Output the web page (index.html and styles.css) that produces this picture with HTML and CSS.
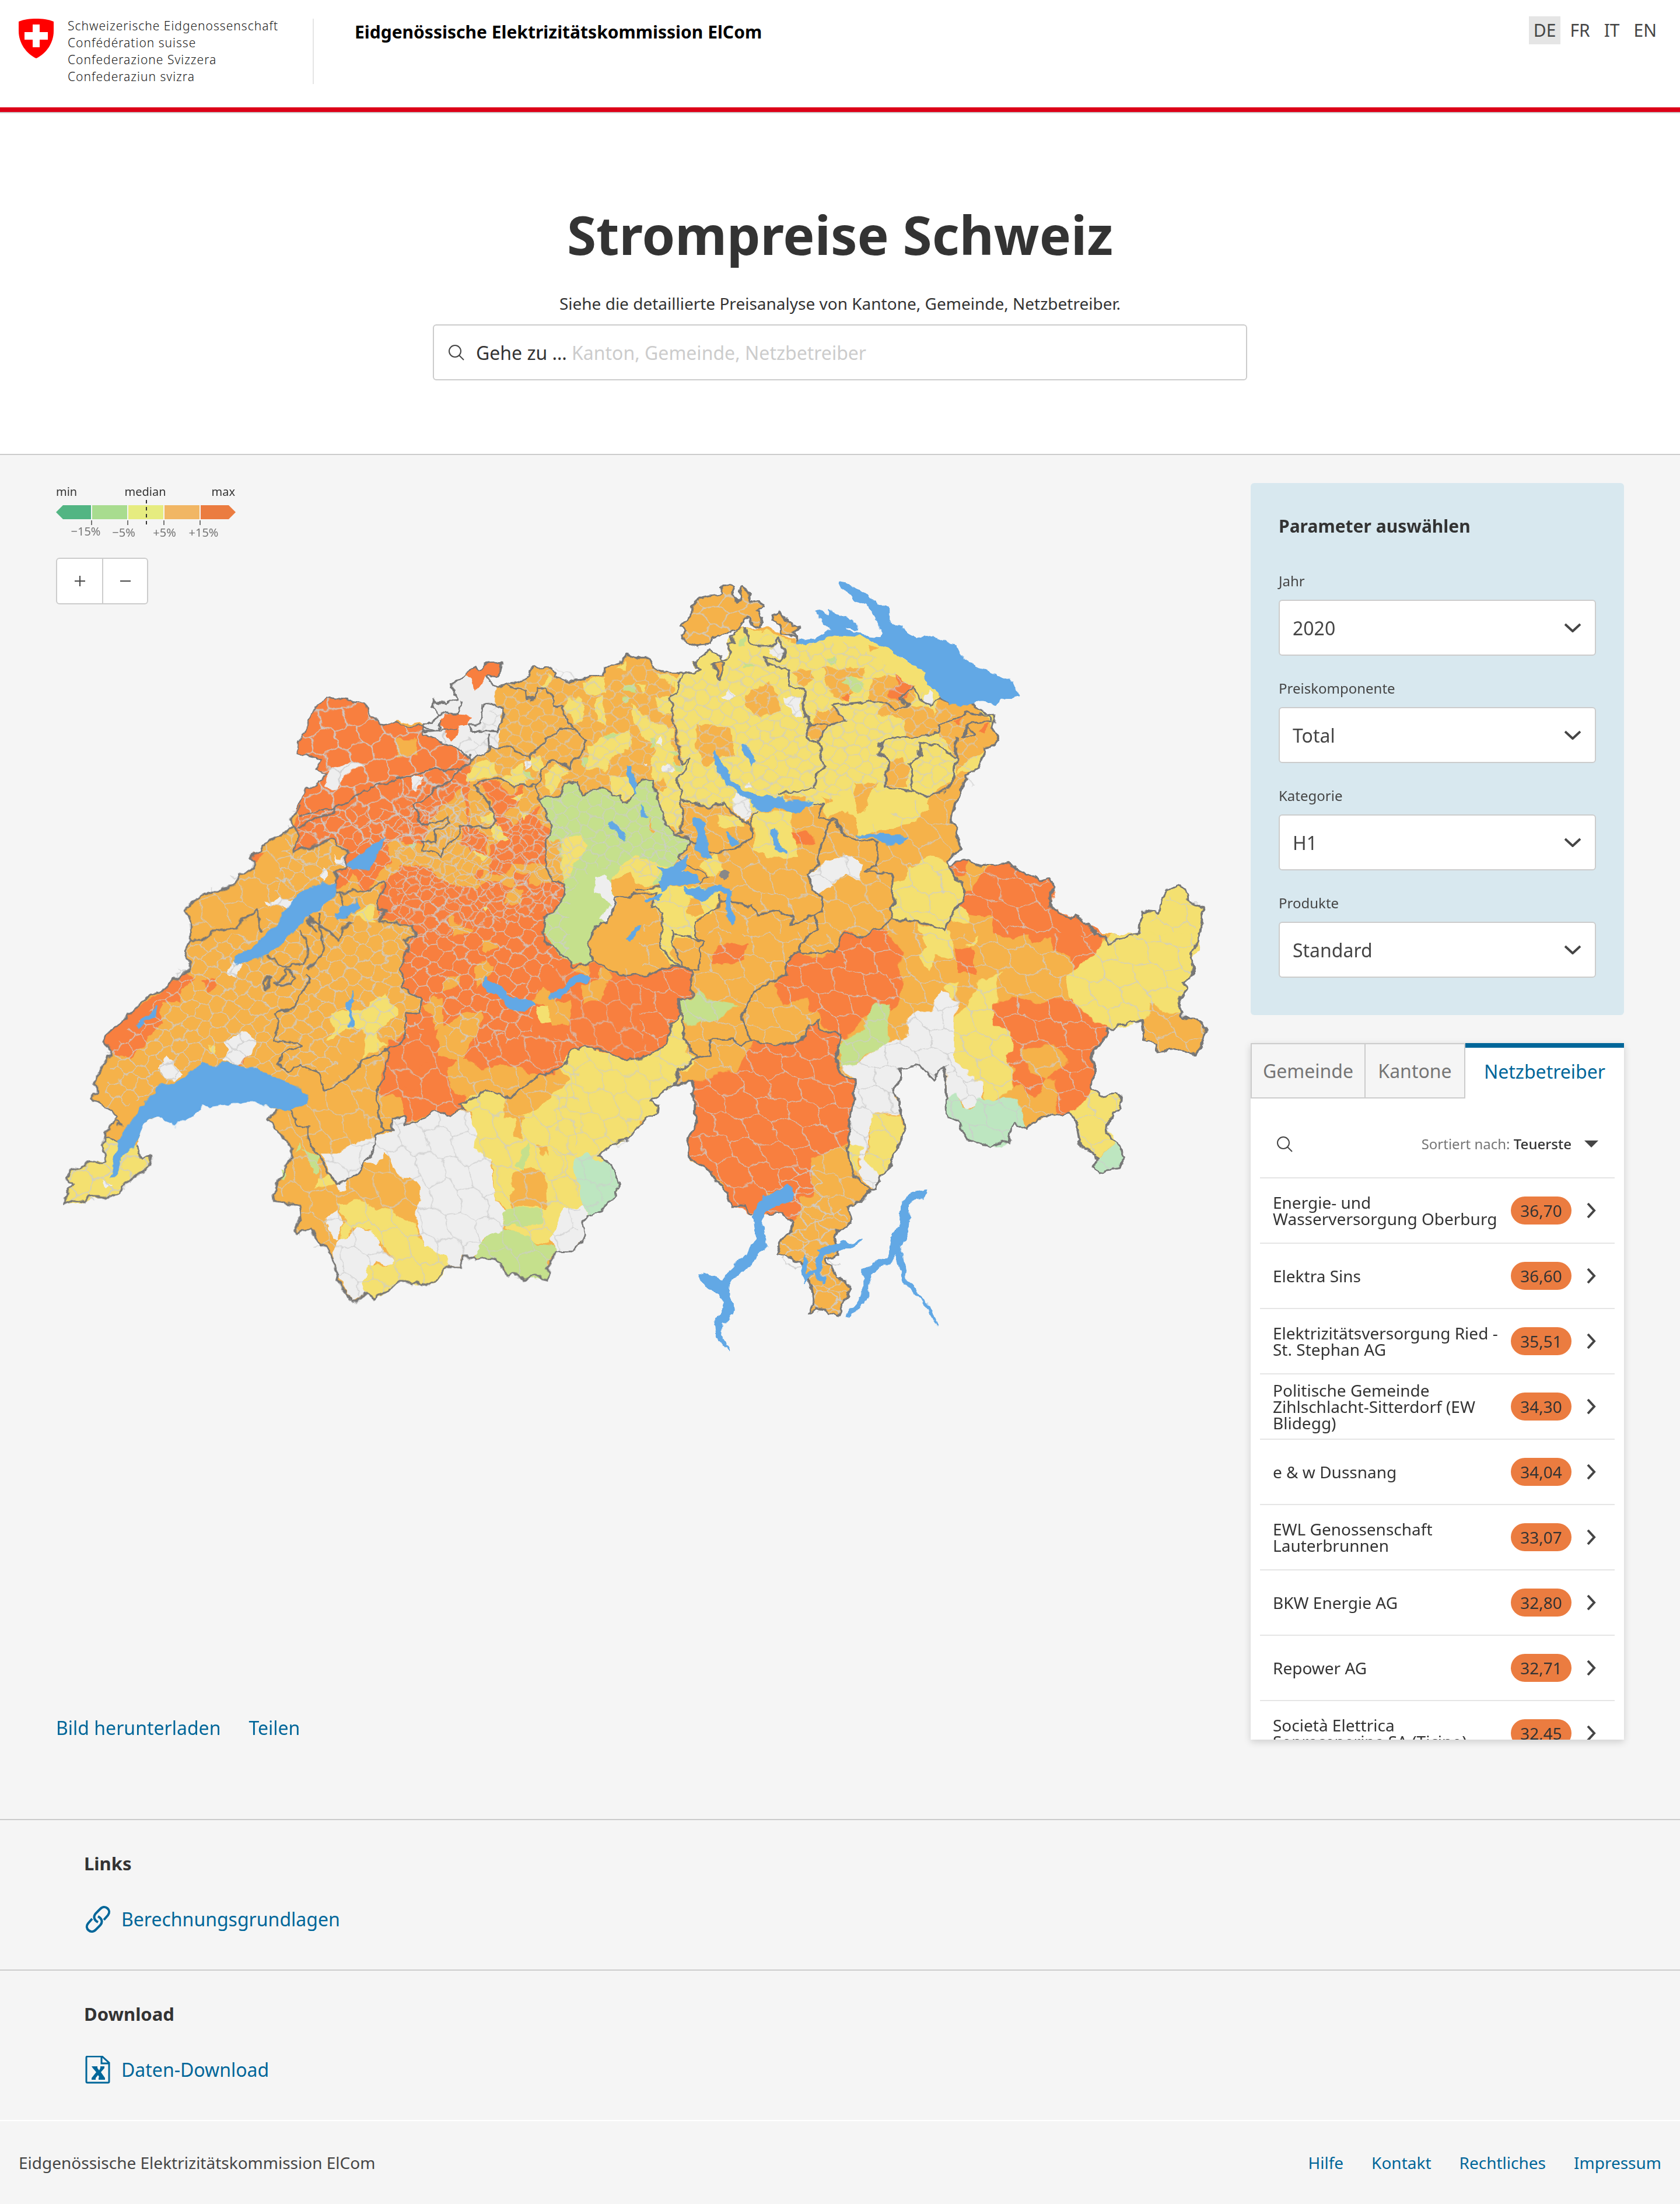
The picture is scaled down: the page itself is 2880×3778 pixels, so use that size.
FILE: index.html
```html
<!DOCTYPE html>
<html lang="de">
<head>
<meta charset="utf-8">
<meta name="viewport" content="width=device-width, initial-scale=1">
<title>Strompreise Schweiz</title>
<link rel="stylesheet" href="styles.css">
</head>
<body>
<header class="header">
  <a class="brand" href="#">
    <svg class="shield" viewBox="0 0 60 68" aria-hidden="true"><path fill="#f00" d="M0 5C9 1 20 0 30 0s21 1 30 5v16c0 21-13 39-30 47C13 60 0 42 0 21z"/><path fill="#fff" d="M24 10h12v13h14v13H36v13H24V36H10V23h14z"/></svg>
    <span class="brand-names"><span>Schweizerische Eidgenossenschaft</span><span>Confédération suisse</span><span>Confederazione Svizzera</span><span>Confederaziun svizra</span></span>
  </a>
  <p class="office">Eidgenössische Elektrizitätskommission ElCom</p>
  <nav class="langs" aria-label="Sprache"><a class="lang current" href="#de">DE</a><a class="lang" href="#fr">FR</a><a class="lang" href="#it">IT</a><a class="lang" href="#en">EN</a></nav>
</header>

<main>
<section class="hero">
  <h1>Strompreise Schweiz</h1>
  <p class="lead">Siehe die detaillierte Preisanalyse von Kantone, Gemeinde, Netzbetreiber.</p>
  <div class="search">
    <svg class="icon-search" viewBox="0 0 28 28" aria-hidden="true"><circle cx="12" cy="12" r="10"/><path d="M19 19l8 8"/></svg>
    <label for="goto">Gehe zu …</label>
    <input id="goto" type="text" placeholder="Kanton, Gemeinde, Netzbetreiber">
  </div>
</section>

<section class="explorer">
  <div class="map-column">
    <div class="map-stage">
      <svg class="map" viewBox="96 960 2000 1380" role="img" aria-label="Karte der Strompreise">
        <defs>
          <filter id="rough" filterUnits="userSpaceOnUse" x="60" y="950" width="2040" height="1400" color-interpolation-filters="sRGB">
            <feTurbulence type="fractalNoise" baseFrequency="0.045" numOctaves="3" seed="4"/>
            <feDisplacementMap in="SourceGraphic" scale="16" xChannelSelector="R" yChannelSelector="G"/>
          </filter>
          <path id="cells" d="M0 10 18 4 42 14 58 6 83 13 97 5 120 10M0 38 22 46 37 36 64 44 78 35 103 45 120 38M0 72 16 64 43 75 60 65 82 74 99 66 120 72M0 98 23 106 39 95 62 104 77 97 104 107 120 98M0 10V38M42 14 37 36M83 13 78 35M22 46 16 64M64 44 60 65M103 45 99 66M0 72V98M43 75 39 95M82 74 77 97M120 10V38M120 72V98M23 106 18 124M62 104 58 126M104 107 97 125M23-14 18 4M62-16 58 6M104-13 97 5"/>
          <pattern id="fine" width="120" height="120" patternUnits="userSpaceOnUse" patternTransform="rotate(24) scale(1.6 1.8)"><use href="#cells" class="mesh"/></pattern>
          <pattern id="medium" width="120" height="120" patternUnits="userSpaceOnUse" patternTransform="rotate(50) scale(.4 .5)"><use href="#cells" class="mesh"/></pattern>
          <pattern id="coarse" width="120" height="120" patternUnits="userSpaceOnUse" patternTransform="rotate(62) scale(2.6 2.2)"><use href="#cells" class="mesh"/></pattern>
          <path id="land-a" d="M745 0 735 15 705 48 720 60 712 70 690 88 660 103 640 115 625 122 625 138 600 150 590 168 605 185 590 200 565 212 552 240 540 250 515 254 480 268 440 275 425 290 392 325 405 345 414 365 412 412 402 425 397 455 408 478 405 500 385 520 358 535 340 555 300 575 270 600 235 635 205 665 150 718 182 760 165 775 150 800 135 830 122 845 130 870 115 897 140 915 165 930 192 952 180 975 165 990 160 1015 147 1045 158 1065 158 1085 140 1092 125 1088 100 1098 85 1108 55 1118 40 1140 60 1155 48 1180 33 1217 75 1203 95 1210 110 1195 145 1197 165 1205 205 1187 210 1162 240 1142 290 1110 298 1076 270 1085 252 1060 248 1030 262 990 290 955 330 955 360 980 430 940 450 912 540 908 610 908 670 925 648 960 665 985 690 1015 715 1045 715 1075 690 1115 672 1150 662 1185 665 1210 700 1218 740 1222 735 1250 738 1272 725 1295 728 1312 768 1290 785 1310 810 1345 830 1370 828 1392 845 1415 850 1450 870 1475 895 1515 910 1515 935 1495 963 1515 970 1495 1010 1480 1040 1450 1070 1462 1085 1458 1107 1473 1145 1445 1165 1430 1180 1408 1222 1408 1232 1378 1253 1377 1258 1390 1310 1385 1335 1400 1360 1443 1380 1428 1415 1450 1430 1440 1475 1450 1475 1415 1485 1400 1500 1363 1568 1362V0z"/>
          <path id="land-b" d="M0 578 40 570 85 585 115 568 140 545 120 520 125 495 170 508 200 490 183 440 230 415 235 390 262 375 275 388 310 365 355 357 345 405 300 415 330 445 370 440 440 412 457 377 520 377 535 400 530 415 570 432 600 418 660 415 690 410 700 385 750 368 780 335 800 345 850 345 865 380 895 398 965 400 1568 440V1568H0z"/>
          <path id="land-c" d="M1500 1568 1440 1568 1455 1500 1482 1465 1475 1395 1497 1345 1503 1270 1512 1230 1470 1205 1468 1180 1443 1148 1410 1170 1392 1215 1390 1248 1345 1240 1338 1320 1310 1330 1252 1355 1245 1332 1218 1330 1205 1290 1165 1262 1140 1260 1100 1230 1098 1180 1108 1160 1095 1118 1070 1130 1030 1100 965 1070 935 1080 910 1080 872 1065 832 1078 828 1060 855 1020 850 970 835 915 845 855 865 790 885 750 905 735 925 670 950 660 960 635 943 600 950 555 920 540 908 530 885 495 820 510 760 400 640 290 560 262 500 270 415 290 375 258 320 240 265 240 240 265 232 330 220 360 185 320 138 360 138 380 160 385 110 400 50 400 20 350 0 345V1568z"/>
          <path id="land-d" d="M90 552 135 543 142 575 145 610 143 712 122 755 132 820 185 862 200 905 215 925 232 945 243 990 275 992 300 1018 345 1018 378 1022 408 1052 400 1085 372 1125 362 1165 395 1172 430 1208 450 1265 460 1325 445 1375 465 1362 490 1368 500 1385 525 1390 540 1345 565 1285 520 1245 515 1210 495 1190 525 1160 512 1105 520 1080 555 1070 567 1030 557 995 588 975 612 935 632 927 640 880 672 845 678 790 697 750 707 715 705 685 693 665 695 620 690 595 673 570 690 545 695 495 750 482 782 532 800 490 818 483 815 510 820 655 850 690 875 750 935 773 968 755 988 767 998 690 1032 708 1068 675 1115 652 1132 665 1155 655 1172 690 1170 725 1180 775 1220 800 1225 825 1212 850 1230 865 1280 850 1300 812 1285 770 1258 740 1253 705 1268 650 1292 640 1295 603 1275 583 1238 592 1212 570 1215 435 1240 390 1250 345 1268 345 1310 322 1330 332 1345 312 1352 390 1380 400 1390 428 1430 420 1470 430 1488 448 1505 410 1513 340 1490 308 1455 305 1443 240 1462 210 1455 180 1480 150 1470 100 1497 70 1500 0 1245 0H0V400z"/>
          <path id="land-e" d="M900 1157 1000 1157 1072 1155 1090 1130 1108 1092 1100 1060 1108 1020 1160 1010 1178 975 1210 960 1208 940 1220 915 1200 850 1172 822 1150 805 1190 765 1215 752 1250 748 1275 708 1300 695 1305 670 1345 650 1348 622 1325 605 1350 592 1385 560 1405 550 1455 540 1470 552 1475 600 1473 715 1445 755 1458 800 1455 825 1500 848 1530 870 1568 935V0H800z"/>
          <path id="land-t" d="M325 520 308 519 292 516 270 514 255 499 232 496 229 501 222 508 212 528 211 536 229 540 226 548 232 551 218 563 210 576 240 600H334V525z"/>
          <path id="schaffhausen" d="M213 88 248 98 252 145 265 140 272 98 290 115 292 150 315 143 328 160 310 185 325 205 318 238 280 210 265 240 240 248 190 275 185 298 150 305 120 290 105 265 118 255 103 235 135 195 138 165 160 130 212 118zM418 290 400 265 375 258 370 228 350 215 352 195 372 180 385 212 420 230 405 255z"/>
        </defs>
        <g filter="url(#rough)">
          <g class="f-orange">
            <use href="#land-a" transform="translate(90 1380) scale(.574 .5612)"/>
            <use href="#land-b" transform="translate(680 960) scale(.5102 .4847)"/>
            <use href="#land-c" transform="translate(1100 960) scale(.6378 .4847)"/>
            <use href="#land-d" transform="translate(1100 1600) scale(.6378 .4719)"/>
            <use href="#land-e" transform="translate(440 1600) scale(.5102 .4719)"/>
            <use href="#schaffhausen" transform="translate(1100 960) scale(.6378 .4847)"/>
          </g>
          <!-- Jura -->
          <g transform="scale(2.41)">
            <use href="#land-t" class="f-red"/>
            <path class="f-orange" d="M284 523 298 525 298 540 284 538zM300 600 308 580 330 560 334 610z"/>
            <path class="f-empty" d="M233 548 250 541 260 544 245 552 240 562 232 560zM292 555 303 549 303 562 294 562z"/>
          </g>
          <!-- Western cantons -->
          <g transform="translate(90 1380) scale(.574 .5612)">
            <path class="f-red" d="M720 62 732 95 718 145 840 103 880 145 875 185 845 210 850 265 940 255 990 200 1050 120 1040 50 1080 20 1070 0 745 0zM975 345 980 250 1010 210 1080 180 1140 210 1180 240 1260 260 1300 230 1370 250 1420 240 1530 235 1530 300 1470 330 1470 420 1568 490 1568 740 1520 800 1450 830 1340 795 1225 800 1190 800 1195 850 1225 885 1230 925 1150 935 1050 975 1045 890 970 890 1005 715 1060 700 1060 635 1100 640 1100 590 1045 560 1040 500 1060 420 1085 400 1080 370zM150 718 235 635 340 555 395 512 422 535 415 550 385 570 380 600 330 610 325 665 290 710 235 775 182 755zM590 168 600 145 635 145 605 180zM440 540 490 530 490 555 470 575 455 550zM550 797 590 757 570 790zM1225 60 1250 60 1300 100 1290 150 1250 140zM1300 150 1340 110 1400 60 1470 90 1480 180 1380 175 1330 220z"/>
            <path class="f-orange" d="M1045 325 1080 300 1170 270 1180 300 1100 325zM1180 335 1210 360 1260 380 1240 400 1200 400zM1275 410 1310 415 1310 450 1280 440zM1340 300 1380 250 1410 255 1400 300zM850 265 880 235 900 210 920 260zM1000 120 1040 90 1060 130 1010 180z"/>
            <path class="f-yellow" d="M830 635 925 625 990 572 1032 635 965 700 975 725 1005 730 930 770 940 700 900 680 870 690 820 720 840 680zM895 335 960 300 960 355 930 350zM160 1015 147 1045 158 1065 158 1085 125 1088 100 1098 55 1118 40 1140 60 1155 33 1217 95 1210 145 1197 165 1205 205 1187 210 1162 290 1110 298 1076 270 1085 252 1060 248 1030 200 1030zM465 738 490 740 485 757zM1310 65 1350 80 1360 115 1310 95zM1245 132 1295 150 1285 168zM1280 320 1300 315 1295 335zM1045 62 1075 68 1060 88z"/>
            <path class="f-empty" d="M630 300 680 280 720 290 710 315 650 305zM525 510 545 475 565 495 545 530zM795 210 812 190 825 215 810 232zM838 155 860 165 880 150 875 185 850 175zM510 725 565 692 605 718 590 760 550 795 510 780 525 750zM318 805 345 765 392 820 365 845 335 830zM148 1145 180 1158 160 1172z"/>
          </g>
          <!-- Northern midland -->
          <g transform="translate(680 960) scale(.5102 .4847)">
            <path class="f-red" d="M270 785 340 780 380 830 430 800 420 850 360 900 380 940 455 880 475 870 470 920 510 950 510 975 500 1040 500 1070 380 1080 350 1120 305 1110 320 1010 370 980 330 930 320 860zM215 940 250 940 300 990 290 1030 255 1030 220 1010zM0 860 55 860 60 900 90 940 50 990 0 1000zM0 600 85 600 215 665 245 710 225 740 180 775 120 820 0 860zM5 1080 110 1090 110 1130 200 1150 260 1180 300 1180 290 1250 0 1250zM390 1100 450 1120 440 1150 395 1140zM260 1110 300 1090 280 1145zM435 1150 570 1145 555 1215 500 1255 490 1310 500 1355 570 1405 597 1438 560 1500 400 1500 380 1300z"/>
            <path class="f-orange" d="M0 632 70 632 70 690 0 690z"/>
            <path class="f-empty" d="M85 585 115 568 140 545 120 520 125 495 170 508 200 490 183 440 230 415 300 415 330 445 330 500 360 520 345 600 345 660 305 665 305 685 250 710 205 665 135 640 100 620zM50 760 95 765 90 800 60 820zM423 715 445 705 455 725 435 740z"/>
            <path class="f-red" d="M145 565 165 550 225 543 250 560 240 580 210 590 205 620 185 640 150 600zM235 390 262 375 275 388 310 365 355 357 345 405 300 412 290 430 268 465 262 435 235 410z"/>
            <path class="f-yellow" d="M570 490 620 490 630 560 600 580 570 530zM620 430 700 415 700 465 640 475zM670 490 690 480 705 540 700 590 670 570zM780 510 800 520 850 560 930 600 935 700 950 760 955 960 900 930 870 800 850 740 870 680 790 560zM640 660 720 610 780 600 785 660 730 700 700 740 640 740zM500 760 540 720 580 740 520 830 495 800zM715 760 780 770 800 820 770 855 745 830 720 820zM230 780 260 715 335 710 335 765zM335 770 410 760 440 800 385 800zM440 700 480 690 500 740 470 750zM385 740 420 720 440 790 400 770zM485 450 515 400 520 430 500 455zM740 385 770 355 770 390zM805 435 835 435 830 470zM870 490 920 480 925 540 890 545zM870 400 950 420 930 450 890 430zM385 845 430 820 415 855zM410 890 450 890 430 910zM280 905 330 890 325 930 290 925zM320 935 350 945 375 995 320 975z"/>
            <path class="f-orange" d="M900 550 930 550 925 580zM870 780 900 770 915 800 895 825 865 800zM920 630 940 630 940 655 920 650z"/>
            <path class="f-green" d="M475 845 500 838 555 838 570 790 605 785 620 830 680 805 745 830 760 858 782 852 795 825 820 775 860 785 880 860 900 920 930 968 975 985 990 998 945 1050 920 1100 880 1150 840 1150 790 1110 725 1130 720 1160 735 1200 705 1280 668 1290 648 1360 660 1420 597 1438 500 1355 490 1310 500 1255 555 1215 570 1145 550 1100 545 990 515 990 510 920zM760 440 800 435 805 470 770 470zM620 700 645 700 635 735 620 725zM700 615 745 608 730 630 710 635zM850 630 868 640 865 665 848 660zM930 720 985 720 975 740 935 750zM425 745 455 750 455 780 435 775zM755 490 780 490 770 510zM915 680 950 680 940 700zM40 1005 60 1000 55 1025z"/>
            <path class="f-yellow" d="M550 990 620 970 640 1010 600 1080 565 1135 550 1090zM725 1130 750 1080 800 1045 905 1080 890 1105 850 1150 800 1140 790 1110z"/>
            <path class="f-empty" d="M665 1115 700 1110 725 1150 725 1190 745 1200 705 1280 680 1265 720 1220 665 1170zM870 650 885 622 900 655zM895 725 915 720 930 745 900 750zM828 710 845 718 835 728z"/>
            <path class="f-orange" d="M845 905 870 965 855 960z"/>
          </g>
          <!-- Zürich and the east -->
          <g transform="translate(1100 960) scale(.6378 .4847)">
            <path class="f-yellow" d="M105 400 160 385 138 380 138 360 185 320 220 360 235 310 240 265 282 240 365 265 415 295 500 270 560 265 620 275 690 335 765 405 790 455 805 490 785 555 795 615 845 690 850 755 840 770 770 840 770 880 720 940 580 970 570 920 540 880 500 910 480 870 380 880 300 890 250 870 110 860 95 770 110 720 90 560 75 490z"/>
            <path class="f-yellow" d="M300 890 405 890 405 980 425 1055 340 1050 305 1020zM155 1080 205 1030 220 1100 180 1115zM0 1160 120 1150 215 1170 190 1255 145 1265 145 1340 90 1335 75 1395 110 1440 85 1435 50 1380 55 1250 25 1235 40 1190zM205 905 250 900 275 945 210 945zM675 1140 710 1130 715 1095 780 1045 825 1065 870 1180 830 1270 812 1310 770 1285 672 1268zM740 1285 835 1310 835 1410 790 1400 780 1450 740 1400 765 1370zM830 1270 850 1215 880 1225 875 1280 835 1285zM875 1365 908 1330 895 1365zM850 755 870 715 930 665 905 735 885 750zM905 530 950 555 943 600 930 565zM1252 1355 1310 1330 1338 1320 1345 1240 1390 1248 1392 1215 1410 1170 1443 1148 1468 1180 1470 1205 1512 1230 1503 1270 1497 1345 1475 1395 1482 1465 1455 1500 1440 1568 1155 1568 1140 1475 1200 1410 1245 1350z"/>
            <path class="f-orange" d="M125 1190 160 1190 160 1260 125 1250zM145 585 200 580 240 600 245 685 170 725 145 660zM275 475 345 435 370 500 375 530 310 555 280 510zM405 395 460 385 465 420 435 450zM480 385 515 380 605 380 590 420 545 420 575 470 540 500 515 480zM605 300 640 310 620 325zM470 530 520 530 540 565 490 600 475 645 450 615 460 580zM630 545 650 515 720 515 785 530 800 590 795 615 710 625 705 570zM620 420 660 410 740 450 720 520 670 520 610 490zM570 790 630 785 600 890 585 900 570 830zM520 930 555 880 580 920 580 970 550 975zM660 715 700 700 715 730 715 805 655 800zM850 630 940 600 960 635 930 670 870 715 850 700zM380 830 445 845 430 860 390 855zM800 520 850 520 885 495 905 535 860 560 800 580zM192 370 220 365 207 420zM480 840 510 850 490 870z"/>
            <path class="f-red" d="M680 405 735 450 705 490 670 490 670 455 685 445zM535 485 570 470 560 500zM905 595 930 575 925 605zM840 575 860 562 852 585zM832 1078 872 1065 870 1110 850 1115zM905 1120 940 1080 965 1070 1030 1100 1070 1130 1095 1118 1108 1160 1098 1230 1165 1262 1205 1290 1245 1332 1230 1390 1160 1450 1150 1395 1105 1370 1095 1335 1050 1360 1045 1325 1000 1340 940 1320 945 1260 880 1250 850 1215 870 1180 895 1165zM840 1380 885 1370 905 1465 850 1460zM205 1360 288 1360 275 1420 185 1430zM402 965 430 955 465 975 465 1005 415 1010z"/>
            <path class="f-green" d="M540 430 560 415 600 440 575 465zM497 355 520 335 520 360 505 375zM262 280 283 275 275 305 260 300zM275 360 305 380 270 380z"/>
            <path class="f-empty" d="M338 315 365 290 388 320 370 350 345 335zM215 480 235 460 253 480 235 500zM385 480 425 485 430 555 412 550 390 510zM250 830 265 820 295 870 290 920 275 930 250 880zM440 1110 545 1045 595 1075 580 1130 550 1110 475 1190 460 1160zM758 500 772 455 785 495 772 525zM282 800 292 782 298 800z"/>
            <path class="f-dark" d="M205 1120 222 1095 238 1115 220 1135z"/>
          </g>
          <!-- Berne highlands and Valais -->
          <g transform="translate(440 1600) scale(.5102 .4719)">
            <path class="f-red" d="M900 0 970 0 1000 80 1040 105 1140 110 1205 150 1320 150 1390 115 1460 130 1460 235 1420 240 1420 290 1390 330 1380 400 1310 450 1235 460 1100 408 1055 430 1055 470 1000 510 940 520 860 475 760 490 690 460 740 330 700 0zM540 490 620 440 680 465 650 490 650 560 700 600 705 640 650 660 605 645 500 690 490 560 560 570z"/>
            <path class="f-orange" d="M610 355 690 290 755 280 750 330 695 455 765 490 870 480 940 520 835 602 765 568 740 595 700 600 650 560 650 490 675 465 605 440zM555 260 600 225 625 240 630 340 600 360 580 300zM400 595 485 590 495 660 455 680 450 710 425 715zM1060 130 1110 110 1115 160zM1090 190 1140 165 1160 130 1185 130 1185 160 1155 240 1100 260zM735 130 760 90 800 120 780 160 735 200zM750 20 790 20 805 50 770 70zM620 210 640 170 685 155 670 190 630 215zM920 255 960 195 1000 240 1060 245 1050 330 1000 335 960 260z"/>
            <path class="f-yellow" d="M940 270 970 260 995 320 955 325zM685 620 765 568 835 602 830 668 870 670 900 655 945 640 1050 530 1025 495 1055 425 1100 408 1235 460 1310 450 1380 400 1395 330 1420 285 1435 295 1430 370 1445 425 1480 455 1450 495 1410 500 1405 550 1350 592 1325 605 1348 622 1345 650 1305 670 1250 748 1190 765 1150 805 1172 822 1200 850 1220 915 1208 960 1178 975 1160 1010 1108 1018 1035 1005 1000 1090 980 1125 940 1120 830 1070 835 1000 800 960 790 830 760 820 730 780 720 650z"/>
            <path class="f-orange" d="M868 670 900 660 890 745 865 740zM860 880 905 845 970 870 975 1003 910 990 858 990zM940 775 975 780 975 810z"/>
            <path class="f-green" d="M865 845 910 755 918 780 900 855zM835 1000 870 990 965 1005 960 1050 825 1062zM815 1072 910 1095 945 1128 1000 1135 1000 1157 975 1190 972 1255 910 1258 870 1232 845 1250 830 1215 795 1185 725 1180 755 1110zM150 785 210 810 205 880 185 880 180 830zM130 790 145 762 150 780zM80 850 97 880 90 895 75 890z"/>
            <path class="f-mint" d="M1063 820 1105 800 1150 830 1172 822 1200 850 1220 915 1208 960 1178 975 1160 1010 1108 1018 1085 960z"/>
            <path class="f-empty" d="M1030 1005 1095 985 1108 1020 1100 1060 1108 1092 1072 1155 1000 1157 1000 1135 985 1110zM400 740 455 715 455 680 495 665 500 695 540 685 605 645 650 660 710 645 735 700 730 780 785 825 800 960 835 1010 820 1080 755 1105 745 1150 725 1170 695 1172 690 1205 640 1205 625 1165 600 1165 560 1130 535 1060 545 920 515 880 490 890 450 830 430 800 400 835 365 825zM215 800 270 800 340 755 395 750 395 790 330 880 265 905 240 850zM262 910 300 890 305 925 275 935zM230 1040 275 1005 295 1060 270 1115 240 1080zM245 1190 270 1120 330 1075 395 1080 410 1130 460 1190 455 1205 400 1190 355 1265 365 1310 325 1337 290 1270 265 1240 265 1210z"/>
            <path class="f-yellow" d="M270 980 350 975 400 1000 430 990 530 1065 560 1130 625 1165 645 1205 630 1240 560 1287 485 1258 450 1297 400 1320 395 1337 365 1310 352 1265 375 1205 460 1200 440 1145 405 1120 390 1075 320 1075 280 1115 300 1050zM195 925 240 865 258 905z"/>
          </g>
          <!-- Ticino and Grisons -->
          <g transform="translate(1100 1600) scale(.6378 .4719)">
            <path class="f-red" d="M135 543 185 530 205 500 260 500 300 395 365 405 400 400 445 370 445 335 475 320 480 345 535 370 520 450 540 515 570 530 572 600 552 720 550 765 455 820 462 950 430 960 408 1050 378 1022 345 1018 300 1018 243 990 232 945 185 862 132 820 122 755 143 712 145 610zM425 72 455 95 515 75 545-20 585 20 650-20 690 50 708 80 685 110 703 170 695 230 665 285 640 255 600 310 545 385 530 370 485 330 475 285 445 280 440 235 375 260 355 180 390 150 390 100zM945 265 1000 230 1060 255 1130 235 1160 245 1250 325 1250 345 1240 390 1215 435 1212 570 1160 655 1132 665 1118 650 1060 600 1000 560 1000 490 978 475 980 435 998 430 985 360 945 335z"/>
            <path class="f-orange" d="M1020 420 1110 400 1150 470 1110 490 1090 530 1040 500zM965 595 1015 545 1060 600 1085 530 1110 530 1118 650 1035 700 1020 600zM330 940 365 940 350 955z"/>
            <path class="f-green" d="M545 385 600 350 615 280 635 252 660 260 665 360 660 400 600 450 575 478 535 485 525 410zM100 240 135 240 150 205 185 245 262 260 185 320 115 330z"/>
            <path class="f-empty" d="M540 485 580 475 660 395 715 375 712 320 745 285 785 280 800 205 850 245 845 290 840 460 865 495 915 545 918 610 875 640 850 580 820 600 818 483 782 532 750 482 695 495 690 545 673 570 695 620 693 665 625 645 610 740 600 820 635 850 640 880 632 927 612 925 580 870 595 820 555 765 552 720 572 600 570 530z"/>
            <path class="f-yellow" d="M620 645 693 670 707 715 678 790 672 845 645 875 600 825 615 740zM553 770 595 770 580 870 565 850zM845 305 870 265 915 170 970 142 950 185 960 245 945 270 945 335 990 360 1000 430 980 440 1000 520 995 570 960 590 925 615 915 545 865 495 840 460zM810 190 850 175 850 210 835 235 815 210zM1145 165 1245 30 1260 0 1500 0 1497 70 1470 100 1480 150 1455 180 1462 210 1443 240 1450 290 1405 290 1370 245 1365 290 1330 332 1268 345 1220 320 1160 245zM1155 655 1212 570 1238 592 1275 583 1295 603 1292 640 1268 650 1253 705 1275 755 1225 825 1220 800 1180 775 1170 725 1172 690z"/>
            <path class="f-mint" d="M820 600 850 575 865 630 885 640 910 605 960 598 1015 600 1032 708 998 690 988 767 935 773 875 750 850 690 820 655zM1275 755 1285 770 1300 812 1280 850 1230 865 1212 850 1230 820z"/>
          </g>
          <!-- Municipality boundaries -->
          <g>
            <path fill="url(#fine)" transform="translate(90 1380) scale(.43 .42)" d="M950 20 1900 0 2060 100 2060 600 1950 700 1900 950 1700 1000 1500 900 1420 950 1200 960 1080 1130 1050 1080 880 1150 550 1080 400 1180 180 1270 230 1100 220 1010 480 730 540 560 850 500z"/>
            <path fill="url(#fine)" transform="translate(90 1380) scale(.574 .5612)" d="M160 1015 147 1045 158 1085 55 1118 40 1140 60 1155 33 1217 165 1205 205 1187 290 1110 298 1076 252 1060 248 1030z"/>
            <path fill="url(#fine)" transform="translate(680 960) scale(.37 .35)" d="M530 590 640 550 750 520 950 610 1050 560 1150 490 1300 560 1500 560 1580 480 1700 370 2150 420 2700 850 2670 1100 2300 1120 1700 1240 1400 1250 1330 1560 900 1500 800 1640 720 1700 0 1900 0 1100 250 1050z"/>
            <use href="#schaffhausen" fill="url(#fine)" transform="translate(1100 960) scale(.6378 .4847)"/>
            <path fill="url(#fine)" transform="translate(1100 1600) scale(.6378 .4719)" d="M370 860 460 830 500 950 560 1030 510 1100 520 1160 560 1290 525 1390 450 1370 450 1265 362 1165 408 1052z"/>
            <path fill="url(#coarse)" transform="translate(90 1380) scale(.574 .5612)" d="M660 960 760 920 800 880 900 780 1000 700 1568 700V1362L1500 1363 1475 1450 1360 1443 1310 1385 1232 1378 1107 1473 1040 1450 963 1515 895 1515 828 1392 728 1312 740 1222 662 1185 715 1050zM625 125 392 325 414 400 700 290 840 103 720 62z"/>
            <use href="#land-d" fill="url(#coarse)" transform="translate(1100 1600) scale(.6378 .4719)"/>
            <path fill="url(#coarse)" transform="translate(1100 960) scale(.6378 .4847)" d="M110 860 480 870 580 970 840 770 850 970 830 1070 965 1070 1095 1118 1098 1230 1245 1332 1338 1320 1443 1148 1512 1230 1480 1320H0V1000z"/>
            <path fill="url(#coarse)" transform="translate(440 1600) scale(.5102 .4719)" d="M1085 960 1108 1018 1220 915 1150 805 1250 748 1345 650 1325 605 1405 550 1300 400V130H1000V960z"/>
            <use href="#land-t" fill="url(#medium)" transform="scale(2.41)"/>
          </g>
          <!-- Cantonal and national boundaries -->
          <g class="border" transform="translate(90 1380) scale(.574 .5612)">
            <path d="M745 0 735 15 705 48 720 60 712 70 690 88 660 103 640 115 625 122 625 138 600 150 590 168 605 185 590 200 565 212 552 240 540 250 515 254 480 268 440 275 425 290 392 325 405 345 414 365 412 412 402 425 397 455 408 478 405 500 385 520 358 535 340 555 300 575 270 600 235 635 205 665 150 718 182 760 165 775 150 800 135 830 122 845 130 870 115 897 140 915 165 930 192 952 180 975 165 990 160 1015 147 1045 158 1065 158 1085 140 1092 125 1088 100 1098 85 1108 55 1118 40 1140 60 1155 48 1180 33 1217 75 1203 95 1210 110 1195 145 1197 165 1205 205 1187 210 1162 240 1142 290 1110 298 1076 270 1085 252 1060 248 1030M670 925 648 960 665 985 690 1015 715 1045 715 1075 690 1115 672 1150 662 1185 665 1210 700 1218 740 1222 735 1250 738 1272 725 1295 728 1312 768 1290 785 1310 810 1345 830 1370 828 1392 845 1415 850 1450 870 1475 895 1515 910 1515 935 1495 963 1515 970 1495 1010 1480 1040 1450 1070 1462 1085 1458 1107 1473 1145 1445 1165 1430 1180 1408 1222 1408 1232 1378 1253 1377 1258 1390 1310 1385 1335 1400 1360 1443 1380 1428 1415 1450 1430 1440 1475 1450 1475 1415 1485 1400 1500 1363"/>
            <path d="M412 412 440 412 500 380 545 375 610 318 625 390M645 462 690 495 750 490 765 465 745 380M765 350 790 390 765 345 820 380 850 415 890 355M850 268 920 262 985 238 992 255 975 285 975 320 995 320 970 355 1080 370 1085 405 1050 410 1065 430 1040 500M720 60 732 95 718 145 840 103 850 125 880 145 875 185 842 210 850 265M730 70 780 45 840 20 848 0M860 270 868 310 885 345M790 330 810 430 790 470 765 500M630 545 655 525 640 560zM665 545 705 500 728 530 712 552zM160 1015 195 1030M190 965 215 975 195 980"/>
          </g>
          <g class="border border-jura" transform="scale(2.41)"><path d="M325 520 308 519 292 516 270 514 255 499 232 496 229 501 222 508 212 528 211 536 229 540 226 548 232 551 218 563 210 576M213 580 245 572 262 560 282 555"/></g>
          <g class="border" transform="translate(680 960) scale(.5102 .4847)">
            <path d="M85 585 115 568 140 545 120 520 125 495 170 508 200 490 183 440 230 415 235 390 262 375 275 388 310 365 355 357 345 405 300 415 330 445 370 440 440 412 457 377 520 377 535 400 530 415 570 432 600 418 660 415 690 410 700 385 750 368 780 335 800 345 850 345 865 380 895 398 965 400 1020 390 1000 378 1000 358 1050 320 1085 340 1090 360 1115 350 1120 300 1135 290 1125 265 1160 240"/>
            <path d="M570 1145 555 1215 500 1255 490 1310 500 1355 570 1405 597 1438 660 1420 648 1360 668 1290 705 1280 740 1200 800 1180 870 1180 855 1230 895 1245 885 1370 930 1420 960 1440M475 845 500 838 555 838 570 790 605 785 620 830 680 805 745 830 760 858 782 852 795 825 820 775 860 785 880 860 900 920 930 968 975 985 990 998 945 1050 1045 1120 1020 1150M475 845 510 920 515 970 500 1000 505 1090 525 1135 570 1145M465 800 490 740 535 710 580 730 620 690 635 640 595 600 565 545 565 515 530 510 500 455 470 450 470 490 432 495 430 465 370 440M595 600 545 600 480 650 440 700 380 665 310 660M320 500 290 510 285 580 245 580 250 605 335 608 360 560 360 520zM85 585 90 610 130 640 215 665 245 710 225 740 100 742 0 775M225 740 180 775 120 820 55 865 90 935 175 910 180 930 130 960 130 1000 80 990 90 1020 150 1050 160 1010 200 985 210 940 240 935 315 948 335 920 310 860 270 810 258 788 345 770 390 805 465 800 475 845M245 710 310 680 305 620M140 545 205 545 215 490M85 605 140 600 150 565M965 400 950 450 915 490 930 560 940 620 955 720 990 705 945 770 955 850 1050 870 1100 860 1135 890 1160 930 1195 937 1190 980 1145 1025 1085 1030 1050 1030M955 850 960 965 930 968M990 998 1030 1000M1195 937 1195 900 1215 885M800 1170 860 1155 885 1160M930 1310 925 1360 965 1440 1020 1445 1020 1380 1035 1345 925 1320M1035 1345 1005 1330 1000 1280 1080 1230 1085 1180M660 1420 700 1440 740 1465 850 1465 940 1430 985 1445"/>
          </g>
          <g class="border" transform="translate(1100 960) scale(.6378 .4847)">
            <use href="#schaffhausen"/>
            <path d="M1455 1500 1482 1465 1475 1395 1497 1345 1503 1270 1512 1230 1470 1205 1468 1180 1443 1148 1410 1170 1392 1215 1390 1248 1345 1240 1338 1320 1310 1330 1252 1355 1245 1332 1218 1330 1205 1290 1165 1262 1140 1260 1100 1230 1098 1180 1108 1160 1095 1118 1070 1130 1030 1100 965 1070 935 1080 910 1080 872 1065 832 1078 828 1060 855 1020 850 970 835 915 845 855 865 790 885 750 905 735 925 670 950 660 960 635 943 600 950 555 920 540 908 530 885 495M282 240 290 290 320 305 360 295 368 275 385 320 372 360 330 340 335 365 395 390 395 445 435 455 438 560 460 580 445 620 470 650 493 730 465 770 465 805 370 830M192 370 220 365 207 420zM445 580 500 580M470 650 495 590 545 565 510 520 560 508 620 495 680 525 720 510 690 480 735 455 745 490 775 520 805 490 830 515M650 640 690 625 795 615 800 580 860 560 870 540 930 550 940 572 890 575 865 600 860 625 895 610 870 590M850 630 845 690 840 770 820 810 770 840 735 820 655 800 660 715 640 680 650 640M735 820 718 720 750 690 745 650 790 660 845 690M465 865 485 870 480 910 510 920 555 975 635 1000 630 1080 600 1100 665 1105 675 1140 672 1260 640 1305 585 1340 545 1315 515 1390 425 1390M510 920 490 960 475 1080 440 1110 460 1160 485 1200 478 1245 405 1295 405 1260 370 1235 310 1255 295 1220 210 1210M465 1255 475 1305 425 1350 425 1390M672 1268 770 1285 812 1310 830 1270 870 1180 830 1080"/>
          </g>
          <g class="border" transform="translate(440 1600) scale(.5102 .4719)">
            <path d="M1000 1157 1072 1155 1090 1130 1108 1092 1100 1060 1108 1020 1160 1010 1178 975 1210 960 1208 940 1220 915 1200 850 1172 822 1150 805 1190 765 1215 752 1250 748 1275 708 1300 695 1305 670 1345 650 1348 622 1325 605 1350 592 1385 560 1405 550 1455 540"/>
            <path d="M265 905 330 880 395 790 400 740 425 715 455 715 455 680 495 665 500 695 540 685 605 645 650 660 700 640 685 620 735 600 765 568 835 602 945 520 1025 495 1055 450 1055 425 1100 408 1160 425 1235 460 1310 450 1380 400 1395 330 1420 290 1415 240 1460 235 1460 130 1390 110M265 905 210 810 175 750 175 705 140 700 120 640M420 715 410 640 400 575 430 520 440 420 410 440 360 455 320 510 225 570 210 515 150 475 110 500 75 470 80 440 150 405 130 390 65 390 65 295 120 270 180 170 165 150M440 420 500 375 510 290 545 295 550 235 490 200 485 130"/>
          </g>
          <g class="border" transform="translate(1100 1600) scale(.6378 .4719)">
            <path d="M135 543 142 575 145 610 143 712 122 755 132 820 185 862 200 905 215 925 232 945 243 990 275 992 300 1018M345 1018 378 1022 408 1052 400 1085 372 1125 362 1165 395 1172 430 1208 450 1265 460 1325 445 1375 465 1362 490 1368 500 1385 525 1390 540 1345 565 1285 520 1245 515 1210 495 1190 525 1160 512 1105 520 1080 555 1070 567 1030 557 995 588 975 612 935 632 927 640 880 672 845 678 790 697 750 707 715 705 685 693 665 695 620 690 595 673 570 690 545 695 495 750 482 782 532 800 490 818 483 815 510 820 655 850 690 875 750 935 773 968 755 988 767 998 690 1032 708 1068 675 1115 652 1132 665 1155 655 1172 690 1170 725 1180 775 1220 800 1225 825 1212 850 1230 865 1280 850 1300 812 1285 770 1258 740 1253 705 1268 650 1292 640 1295 603 1275 583 1238 592 1212 570 1215 435 1240 390 1250 345 1268 345 1310 322 1330 332 1345 312 1352 390 1380 400 1390 428 1430 420 1470 430 1488 448 1505 410 1513 340 1490 308 1455 305 1443 240 1462 210 1455 180"/>
            <path d="M100 240 115 400 155 450 180 440 180 385 245 385 262 405 290 390 365 405 400 400 445 370 445 335 475 320 480 345 535 370 520 450 540 515 570 530 572 600 552 720 550 770 570 880 612 935M290 390 270 290 290 235 345 175 390 150 390 100 425 72M155 450 95 500 90 552 135 543"/>
          </g>
          <!-- Lakes -->
          <g class="lake" transform="translate(1100 960) scale(.6378 .4847)"><path d="M530 75 550 80 605 125 660 175 660 210 740 280 780 270 840 295 860 350 940 400 995 430 1013 480 970 490 945 505 915 500 860 515 830 515 765 430 762 400 700 340 630 290 590 270 520 265 440 300 415 290 470 275 510 245 465 185 485 180 510 195 500 175 575 225 580 245 540 225 545 240 610 272 645 275 650 255 630 215 625 180 600 155 555 125 530 90zM195 670 210 700 240 785 310 840 380 840 380 855 465 855 460 868 405 892 375 880 320 885 270 830 235 800 210 750 195 700zM270 660 285 665 305 715 295 725 275 685zM575 968 610 968 660 982 708 980 705 998 660 1000zM140 912 175 925 170 990 185 1060 165 1050 145 1020 150 970 138 940zM230 970 250 980 262 1005 250 1012zM345 955 360 948 370 1010 382 1030 368 1030 355 1000zM40 1080 60 1090 85 1085 122 1045 120 1075 105 1110 140 1110 157 1140 100 1145 75 1150 50 1172 42 1140 58 1130 60 1110zM115 1155 175 1165 220 1150 240 1170 240 1240 250 1260 240 1288 228 1250 230 1180 215 1165 165 1197 120 1180zM15 1208 55 1180 45 1200 20 1212z"/></g>
          <g class="lake" transform="translate(680 960) scale(.5102 .4847)"><path d="M712 925 770 970 765 990 715 945zM778 735 790 735 805 800 800 825 785 790zM818 865 830 870 843 910 830 905zM770 1330 812 1295 812 1312 780 1345z"/></g>
          <g class="lake" transform="translate(440 1600) scale(.5102 .4719)"><path d="M765 165 800 185 860 235 920 245 935 265 885 283 850 270 830 240 770 200zM1070 155 1120 155 1110 175 1070 185 1000 240 985 235zM325 205 318 235 330 245 315 270 325 340 313 335 312 280 300 265 318 240z"/></g>
          <g class="lake" transform="translate(90 1380) scale(.574 .5612)"><path d="M805 235 845 240 852 262 830 285 760 345 640 460 555 485 545 470 635 400 700 320 730 275 790 245zM845 330 908 292 915 308 880 345 850 348zM995 95 985 125 940 190 905 200 878 180 925 150zM250 670 310 620 310 635 255 678zM175 1132 195 1030 262 925 325 850 375 850 450 790 480 798 510 787 590 805 710 850 760 885 762 915 712 930 610 908 540 908 475 918 450 912 430 940 360 980 330 955 290 952 262 990 210 1080 190 1130z"/></g>
          <g class="lake" transform="translate(1100 1600) scale(.6378 .4719)"><path d="M372 930 395 918 412 950 370 985 330 1015 320 1050 335 1110 330 1150 270 1230 240 1270 235 1320 250 1360 230 1410 210 1420 212 1450 235 1512 220 1490 200 1450 195 1410 220 1380 210 1310 180 1290 157 1240 175 1233 210 1260 255 1200 310 1110 300 1030 325 960zM590 1108 575 1140 520 1145 485 1175 482 1230 492 1270 465 1235 440 1275 430 1210 440 1165 442 1245 470 1220 474 1150 540 1120 570 1125zM770 928 755 965 720 985 715 1080 695 1140 715 1265 770 1350 795 1425 778 1390 760 1340 705 1270 685 1165 650 1210 610 1240 610 1325 560 1395 552 1385 595 1320 595 1225 665 1170 670 1100 695 1060 697 980 740 935z"/></g>
        </g>
      </svg>
      <div class="map-tools">
        <svg class="legend" viewBox="0 0 320 112" role="img" aria-label="Legende">
          <g class="legend-name"><text x="0" y="22">min</text><text x="153" y="22" text-anchor="middle">median</text><text x="307" y="22" text-anchor="end">max</text></g>
          <path fill="#52b583" d="M0 50 12 38h48v24H12z"/><path fill="#a8dc8f" d="M62 38h60v24H62z"/><path fill="#e6ec80" d="M124 38h60v24h-60z"/><path fill="#f1b664" d="M186 38h60v24h-60z"/><path fill="#eb7c40" d="M248 38h48l12 12-12 12h-48z"/>
          <path d="M155 29v44" stroke="#333" stroke-width="2" stroke-dasharray="6 6"/>
          <path d="M61 64v8M123 64v8M185 64v8M247 64v8" stroke="#757575" stroke-width="2"/>
          <g class="legend-value" text-anchor="middle"><text x="51" y="90">−15%</text><text x="116" y="92">−5%</text><text x="186" y="92">+5%</text><text x="253" y="92">+15%</text></g>
        </svg>
        <div class="zoom">
          <button type="button" aria-label="Vergrössern"><svg viewBox="0 0 20 20"><path d="M10 1v18M1 10h18"/></svg></button>
          <button type="button" aria-label="Verkleinern"><svg viewBox="0 0 20 20"><path d="M1 10h18"/></svg></button>
        </div>
      </div>
    </div>
    <div class="map-links"><a href="#bild">Bild herunterladen</a><a href="#teilen">Teilen</a></div>
  </div>

  <aside class="side">
    <form class="params">
      <h2>Parameter auswählen</h2>
      <div class="field"><label for="jahr">Jahr</label><div class="select"><select id="jahr"><option>2020</option></select><svg viewBox="0 0 28 16" aria-hidden="true"><path d="M1 2l13 12L27 2"/></svg></div></div>
      <div class="field"><label for="preis">Preiskomponente</label><div class="select"><select id="preis"><option>Total</option></select><svg viewBox="0 0 28 16" aria-hidden="true"><path d="M1 2l13 12L27 2"/></svg></div></div>
      <div class="field"><label for="kategorie">Kategorie</label><div class="select"><select id="kategorie"><option>H1</option></select><svg viewBox="0 0 28 16" aria-hidden="true"><path d="M1 2l13 12L27 2"/></svg></div></div>
      <div class="field"><label for="produkte">Produkte</label><div class="select"><select id="produkte"><option>Standard</option></select><svg viewBox="0 0 28 16" aria-hidden="true"><path d="M1 2l13 12L27 2"/></svg></div></div>
    </form>
    <div class="ranking">
      <div class="tabs" role="tablist"><button type="button" role="tab" class="tab">Gemeinde</button><button type="button" role="tab" class="tab">Kantone</button><button type="button" role="tab" class="tab active" aria-selected="true">Netzbetreiber</button></div>
      <div class="sortbar">
        <button type="button" class="plain" aria-label="Suchen"><svg class="icon-search" viewBox="0 0 28 28"><circle cx="12" cy="12" r="10"/><path d="M19 19l8 8"/></svg></button>
        <button type="button" class="plain sort"><span>Sortiert nach: <b>Teuerste</b></span><svg viewBox="0 0 24 12"><path d="M0 0h24L12 12z"/></svg></button>
      </div>
      <ul class="rows">
        <li><a href="#1"><span class="name">Energie- und Wasserversorgung Oberburg</span><span class="pill">36,70</span><svg viewBox="0 0 16 28"><path d="M2 2l11 12L2 26"/></svg></a></li>
        <li><a href="#2"><span class="name">Elektra Sins</span><span class="pill">36,60</span><svg viewBox="0 0 16 28"><path d="M2 2l11 12L2 26"/></svg></a></li>
        <li><a href="#3"><span class="name">Elektrizitätsversorgung Ried - St. Stephan AG</span><span class="pill">35,51</span><svg viewBox="0 0 16 28"><path d="M2 2l11 12L2 26"/></svg></a></li>
        <li><a href="#4"><span class="name">Politische Gemeinde Zihlschlacht-Sitterdorf (EW Blidegg)</span><span class="pill">34,30</span><svg viewBox="0 0 16 28"><path d="M2 2l11 12L2 26"/></svg></a></li>
        <li><a href="#5"><span class="name">e &amp; w Dussnang</span><span class="pill">34,04</span><svg viewBox="0 0 16 28"><path d="M2 2l11 12L2 26"/></svg></a></li>
        <li><a href="#6"><span class="name">EWL Genossenschaft Lauterbrunnen</span><span class="pill">33,07</span><svg viewBox="0 0 16 28"><path d="M2 2l11 12L2 26"/></svg></a></li>
        <li><a href="#7"><span class="name">BKW Energie AG</span><span class="pill">32,80</span><svg viewBox="0 0 16 28"><path d="M2 2l11 12L2 26"/></svg></a></li>
        <li><a href="#8"><span class="name">Repower AG</span><span class="pill">32,71</span><svg viewBox="0 0 16 28"><path d="M2 2l11 12L2 26"/></svg></a></li>
        <li><a href="#9"><span class="name">Società Elettrica Sopracenerina SA (Ticino)</span><span class="pill">32,45</span><svg viewBox="0 0 16 28"><path d="M2 2l11 12L2 26"/></svg></a></li>
      </ul>
    </div>
  </aside>
</section>

<section class="resource">
  <h2>Links</h2>
  <a href="#grundlagen"><svg viewBox="0 0 48 48" aria-hidden="true"><g fill="none" stroke="currentColor" stroke-width="4"><path d="M34 25l7-8c7-9-5-19-13-11l-8 8c-5 6-2 12 4 15"/><path d="M14 23l-7 8c-7 9 5 19 13 11l8-8c5-6 2-12-4-15"/></g></svg>Berechnungsgrundlagen</a>
</section>
<section class="resource">
  <h2>Download</h2>
  <a href="#daten"><svg viewBox="0 0 48 48" aria-hidden="true"><path fill="none" stroke="currentColor" stroke-width="3" d="M6 1h25l12 11v32q0 2-2 2H6q-2 0-2-2V3q0-2 2-2zM30 2v11h12"/><path fill="currentColor" d="M13 18h10v3l3 4 2-4v-3h7v3l-6 7 7 10v3H25v-3l1-2-2-3-4 5v3h-7v-3l8-10-6-7z"/></svg>Daten-Download</a>
</section>
</main>

<footer class="footer">
  <p>Eidgenössische Elektrizitätskommission ElCom</p>
  <nav><a href="#hilfe">Hilfe</a><a href="#kontakt">Kontakt</a><a href="#rechtliches">Rechtliches</a><a href="#impressum">Impressum</a></nav>
</footer>
</body>
</html>
```
FILE: styles.css
```css
* { box-sizing: border-box; }
body { margin: 0; font-family: "Noto Sans", "Open Sans", sans-serif; font-size: 32px; color: #333; background: #f5f5f5; }
h1, h2, p, ul { margin: 0; padding: 0; }
ul { list-style: none; }
a { color: #069; text-decoration: none; }
button, input, select { font: inherit; color: inherit; }
button { cursor: pointer; }

.header { display: flex; align-items: flex-start; min-height: 194px; padding: 32px 32px 0; background: #fff; border-bottom: 2px solid #ccc; box-shadow: inset 0 -8px #dc0018; }
.brand { display: flex; gap: 24px; width: 506px; height: 112px; border-right: 2px solid #e5e5e5; color: #1a1a1a; }
.shield { width: 60px; height: 68px; }
.brand-names { display: flex; flex-direction: column; font-size: 21px; line-height: 29px; letter-spacing: 1px; font-weight: 300; white-space: nowrap; margin-top: -2px; }
.office { margin-left: 70px; line-height: 46px; font-size: 30px; font-weight: 700; color: #000; }
.langs { display: flex; gap: 8px; margin: -4px 0 0 auto; }
.lang { padding: 0 8px; font-size: 30px; line-height: 48px; color: #454545; }
.current { background: #e5e5e5; }

.hero { display: flex; flex-direction: column; align-items: center; height: 586px; padding: 144px 32px 0; background: #fff; border-bottom: 2px solid #ccc; }
h1 { font-size: 91px; line-height: 128px; }
.lead { margin-top: 34px; font-size: 28px; line-height: 40px; }
.search { display: flex; align-items: center; width: 100%; max-width: 1396px; height: 96px; margin-top: 16px; padding: 0 24px; border: 2px solid #ccc; border-radius: 6px; font-size: 32px; }
.icon-search { width: 28px; height: 28px; fill: none; stroke: #454545; stroke-width: 2; display: block; }
.search label { margin: 0 8px 0 20px; }
.search input { flex: 1; border: 0; padding: 0; outline: 0; background: none; }
.search input::placeholder { color: #ccc; opacity: 1; }

.explorer { display: grid; grid-template-columns: minmax(0, 1fr) 640px; gap: 48px; padding: 48px 96px 136px; }
.map-column { display: flex; flex-direction: column; justify-content: space-between; }
.map-stage { display: grid; }
.map, .map-tools { grid-area: 1 / 1; }
.map { width: 100%; margin-top: 132px; }
.map-tools { justify-self: start; align-self: start; }
.f-orange { fill: #f5b24a; }
.f-red { fill: #f87f3f; }
.f-yellow { fill: #f4e070; }
.f-green { fill: #c5e08c; }
.f-mint { fill: #bde6c0; }
.f-empty { fill: #eee; }
.f-dark { fill: #888; }
.lake { fill: #62a8e5; stroke: #62a8e5; stroke-width: 4; stroke-linejoin: round; }
.mesh { fill: none; stroke: #ccc; stroke-width: 2; }
#coarse .mesh { stroke-width: 1px; }
.border { fill: none; stroke: #777; stroke-width: 6; stroke-linejoin: round; }
.border-jura { stroke-width: 1px; }
.legend { display: block; width: 320px; height: 112px; }
.legend-name { font-size: 20px; fill: #333; }
.legend-value { font-size: 20px; fill: #757575; }
.zoom { display: inline-flex; margin-top: 16px; border: 2px solid #ccc; border-radius: 6px; background: #fff; }
.zoom button { display: flex; align-items: center; justify-content: center; width: 77px; height: 76px; padding: 0; border: 0; background: none; }
.zoom button + button { border-left: 2px solid #ccc; }
.zoom svg { width: 20px; height: 20px; fill: none; stroke: #454545; stroke-width: 2; }
.map-links { display: flex; gap: 48px; font-size: 32px; line-height: 40px; }

.side { display: flex; flex-direction: column; gap: 48px; }
.params { padding: 48px 48px 64px; background: #d8e8ef; border-radius: 6px; }
.params h2 { font-size: 30px; line-height: 52px; }
.field { margin-top: 48px; }
.field + .field { margin-top: 36px; }
.field label { display: block; padding-bottom: 12px; font-size: 24px; line-height: 40px; color: #454545; }
.select { display: grid; align-items: center; }
.select select, .select svg { grid-area: 1 / 1; }
.select select { appearance: none; width: 100%; height: 96px; padding: 0 22px; border: 2px solid #ccc; border-radius: 6px; background: #fff; font-size: 32px; color: #454545; }
.select svg { justify-self: end; width: 28px; height: 16px; margin-right: 26px; fill: none; stroke: #454545; stroke-width: 4; pointer-events: none; }

.ranking { background: #fff; box-shadow: 0 4px 12px rgba(0, 0, 0, .16); }
.tabs { display: grid; grid-template-columns: 195px 173px 1fr; }
.tab { height: 95px; padding: 0; border: 2px solid #ccc; border-right: 0; background: #f5f5f5; font-size: 32px; color: #757575; }
.active { border: 0; border-top: 8px solid #069; background: #fff; color: #069; padding-bottom: 6px; }
.tab:nth-child(2) { border-right: 2px solid #ccc; }
.sortbar { display: flex; align-items: center; justify-content: space-between; height: 135px; margin: 0 16px; padding: 20px 28px 0; }
.plain { padding: 0; border: 0; background: none; }
.sort { display: flex; align-items: center; gap: 22px; font-size: 24px; color: #757575; }
.sort b { font-weight: 500; color: #333; }
.sort svg { width: 24px; height: 12px; fill: #454545; }
.rows { max-height: 964px; margin: 0 16px; overflow: hidden; }
.rows a { display: grid; grid-template-columns: minmax(0, 1fr) 104px 16px; align-items: center; height: 112px; padding: 0 32px 0 22px; border-top: 2px solid #e5e5e5; color: #333; font-size: 28px; line-height: 28px; }
.name { padding-right: 16px; }
.pill { height: 48px; border-radius: 24px; background: #eb7c40; line-height: 48px; text-align: center; }
.rows a { column-gap: 0; grid-template-columns: minmax(0, 1fr) 104px 42px; }
.rows svg { width: 16px; height: 28px; justify-self: end; fill: none; stroke: #454545; stroke-width: 4; }

.resource { height: 258px; padding: 50px 144px 0; border-top: 2px solid #ccc; }
.resource h2 { font-size: 31px; line-height: 48px; }
.resource a { display: inline-flex; align-items: center; gap: 16px; margin-top: 48px; line-height: 48px; }
.resource svg { width: 48px; height: 48px; }
.footer { display: flex; align-items: center; justify-content: space-between; height: 143px; padding: 0 32px; border-top: 2px solid #fff; font-size: 28px; color: #454545; }
.footer nav { display: flex; gap: 48px; }
```
